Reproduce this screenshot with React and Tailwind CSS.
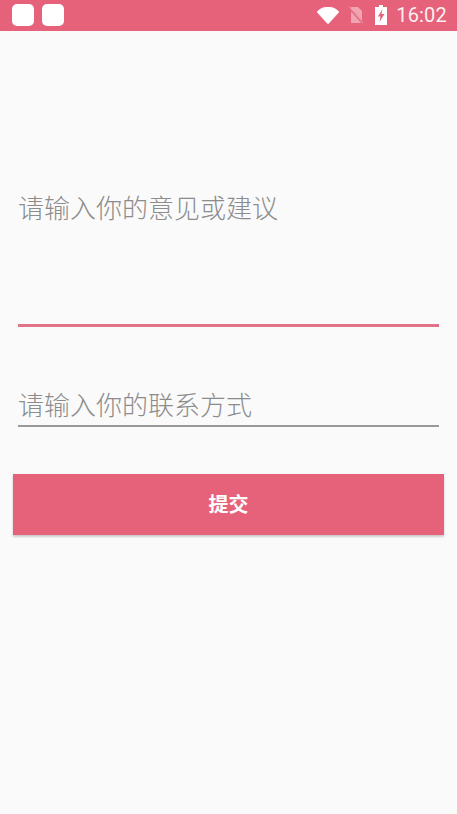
const cjk = { fontFamily: 'Roboto, "Noto Sans CJK SC", sans-serif' };

export default function App() {
  return (
    <div className="w-[457px] h-[814px] bg-[#fafafa] flex flex-col overflow-hidden font-['Roboto','Noto_Sans_CJK_SC',sans-serif]">
      <header className="h-[31px] shrink-0 bg-[#e6627b] flex items-start pt-[4px] pl-[12px] pr-[10px] text-white">
        <div className="flex gap-[8px]">
          <div className="w-[22px] h-[22px] rounded-[5px] bg-white" />
          <div className="w-[22px] h-[22px] rounded-[5px] bg-white" />
        </div>
        <div className="ml-auto flex items-center h-[22px]">
          <svg width="22" height="17" viewBox="0 0 22 17" className="mr-[9px]"><path d="M0 5C3 1.800 6.800 0 11 0s8 1.800 11 5L11 17z" fill="#fff" strokeLinejoin="round" stroke="#fff" strokeWidth=".6" /></svg>
          <svg width="16" height="18" viewBox="0 0 16 18" className="mr-[11px]">
            <path d="M3 1h7l4 4v12H3z" fill="#fff" fillOpacity=".42" />
            <path d="M0.500 1 15 17.500" stroke="#e6627b" strokeWidth="2" />
            <path d="M1 0.500 15 17" stroke="#fff" strokeOpacity=".35" strokeWidth="1" />
          </svg>
          <svg width="12" height="20" viewBox="0 0 12 20" className="mr-[9px]">
            <path d="M4 0h4v2h4v18H0V2h4z" fill="#fff" />
            <path d="M7.500 4 3 11.500h2.500L4.500 17 9.500 9H6.500z" fill="#e6627b" />
          </svg>
          <span className="text-[20px] leading-[30px] tracking-[0.2px] opacity-90">16:02</span>
        </div>
      </header>

      <main className="flex flex-col">
        <div className="mx-[18px] mt-[160px] h-[136px] border-b-[3px] border-[#e0728a] text-[26px] font-light leading-[36px] text-[#8c8c8c]" style={cjk}>
          请输入你的意见或建议
        </div>
        <div className="mx-[18px] mt-[60px] h-[40px] border-b-2 border-[#999999] text-[26px] font-light leading-[38px] text-[#8c8c8c]" style={cjk}>
          请输入你的联系方式
        </div>
        <button className="mx-[13px] mt-[47px] h-[61px] bg-[#e6627b] text-white text-[20px] font-bold shadow-[0_2px_2px_rgba(0,0,0,0.18),0_0_1px_rgba(0,0,0,0.1)]" style={cjk}>
          提交
        </button>
      </main>
    </div>
  );
}
